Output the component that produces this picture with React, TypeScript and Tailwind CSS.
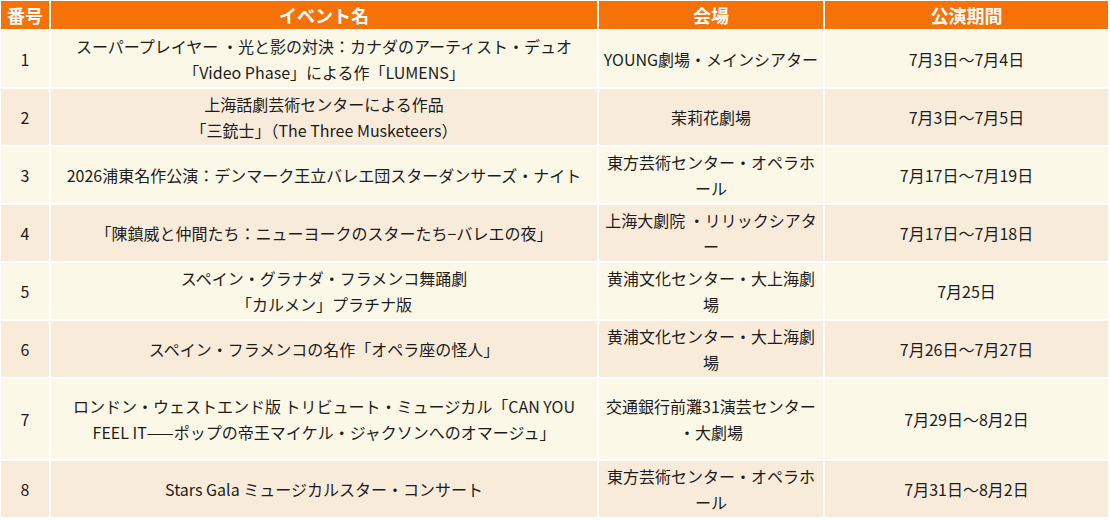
import React from 'react';

type Row = {
  no: string;
  title: React.ReactNode;
  venue: React.ReactNode;
  period: string;
  tall?: boolean;
};

const rows: Row[] = [
  {
    no: '1',
    title: (
      <>
        スーパープレイヤー ・光と影の対決：カナダのアーティスト・デュオ
        <br />
        「Video Phase」による作「LUMENS」
      </>
    ),
    venue: 'YOUNG劇場・メインシアター',
    period: '7月3日～7月4日',
  },
  {
    no: '2',
    title: (
      <>
        上海話劇芸術センターによる作品
        <br />
        「三銃士」（The Three Musketeers）
      </>
    ),
    venue: '茉莉花劇場',
    period: '7月3日～7月5日',
  },
  {
    no: '3',
    title: '2026浦東名作公演：デンマーク王立バレエ団スターダンサーズ・ナイト',
    venue: (
      <>
        東方芸術センター・オペラホ
        <br />
        ール
      </>
    ),
    period: '7月17日～7月19日',
  },
  {
    no: '4',
    title: '「陳鎮威と仲間たち：ニューヨークのスターたち−バレエの夜」',
    venue: (
      <>
        上海大劇院 ・リリックシアタ
        <br />ー
      </>
    ),
    period: '7月17日～7月18日',
  },
  {
    no: '5',
    title: (
      <>
        スペイン・グラナダ・フラメンコ舞踊劇
        <br />
        「カルメン」プラチナ版
      </>
    ),
    venue: (
      <>
        黄浦文化センター・大上海劇
        <br />
        場
      </>
    ),
    period: '7月25日',
  },
  {
    no: '6',
    title: 'スペイン・フラメンコの名作「オペラ座の怪人」',
    venue: (
      <>
        黄浦文化センター・大上海劇
        <br />
        場
      </>
    ),
    period: '7月26日～7月27日',
  },
  {
    no: '7',
    title: (
      <>
        ロンドン・ウェストエンド版 トリビュート・ミュージカル「CAN YOU
        <br />
        FEEL IT——ポップの帝王マイケル・ジャクソンへのオマージュ」
      </>
    ),
    venue: (
      <>
        交通銀行前灘31演芸センター
        <br />
        ・大劇場
      </>
    ),
    period: '7月29日～8月2日',
    tall: true,
  },
  {
    no: '8',
    title: 'Stars Gala ミュージカルスター・コンサート',
    venue: (
      <>
        東方芸術センター・オペラホ
        <br />
        ール
      </>
    ),
    period: '7月31日～8月2日',
  },
];

const headers = ['番号', 'イベント名', '会場', '公演期間'];

export default function App() {
  return (
    <div className="w-[1110px] h-[520px] bg-white font-['Noto_Sans_CJK_JP',sans-serif] text-[#1c1c1c]">
      <div className="grid grid-cols-[48px_546px_224px_283px] gap-[2px] p-px">
        {headers.map((h) => (
          <div
            key={h}
            className="h-[28px] bg-[#f47208] text-white text-[18px] font-bold flex items-center justify-center leading-none"
          >
            {h}
          </div>
        ))}

        {rows.map((r, i) => {
          const bg = i % 2 === 0 ? 'bg-[#fcf8e7]' : 'bg-[#f9ebda]';
          const h = r.tall ? 'h-[80px]' : 'h-[56px]';
          return (
            <React.Fragment key={r.no}>
              <div className={`${bg} ${h} flex items-center justify-center text-[16px] leading-[26px]`}>
                {r.no}
              </div>
              <div className={`${bg} ${h} flex items-center justify-center text-center text-[16px] leading-[26px] px-1 whitespace-nowrap`}>
                <div>{r.title}</div>
              </div>
              <div className={`${bg} ${h} flex items-center justify-center text-center text-[16px] leading-[26px] whitespace-nowrap`}>
                <div>{r.venue}</div>
              </div>
              <div className={`${bg} ${h} flex items-center justify-center text-[16px] leading-[26px]`}>
                {r.period}
              </div>
            </React.Fragment>
          );
        })}
      </div>
    </div>
  );
}
